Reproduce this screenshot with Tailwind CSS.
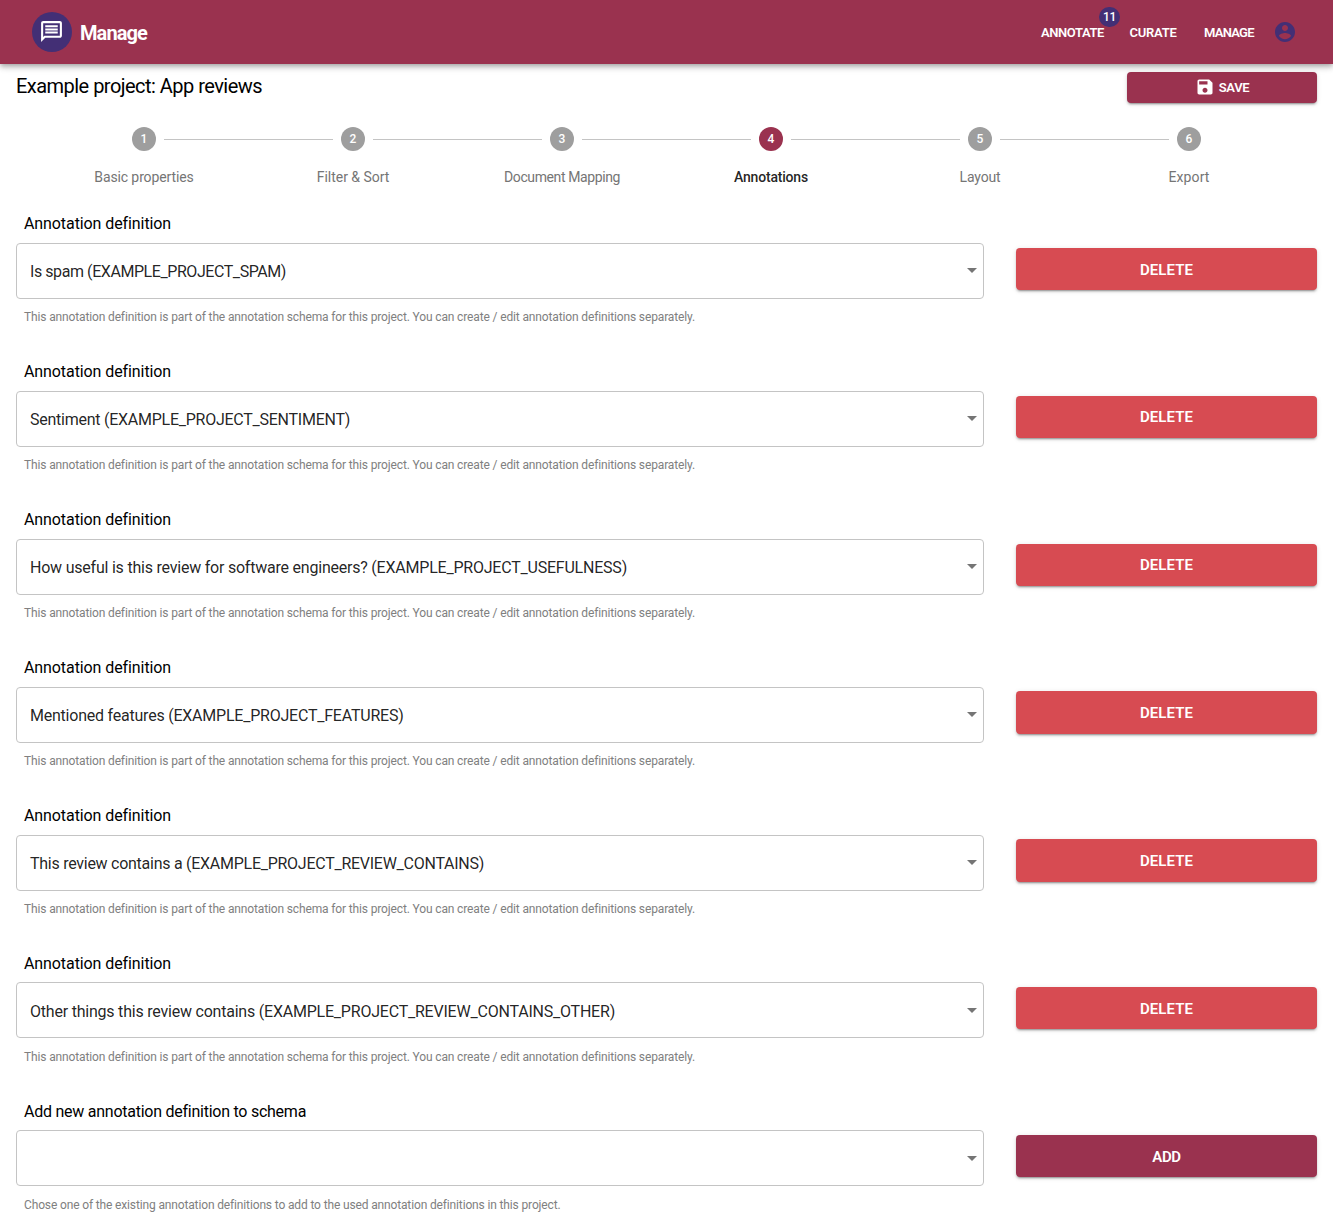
<!DOCTYPE html>
<html lang="en">
<head>
<meta charset="utf-8">
<title>Manage</title>
<script src="https://cdn.jsdelivr.net/npm/@tailwindcss/browser@4"></script>
</head>
<body class="h-[1230px] overflow-hidden bg-white font-['Roboto',sans-serif] text-black">
<header class="relative flex h-16 items-center bg-[#9a324f] pl-8 pr-[36px] text-white shadow-[0_2px_4px_-1px_rgba(0,0,0,0.2),0_4px_5px_0_rgba(0,0,0,0.14),0_1px_10px_0_rgba(0,0,0,0.12)]">
  <div class="flex size-10 items-center justify-center rounded-full bg-[#432f75] pb-px pr-px">
    <svg class="size-[25px]" viewBox="0 0 24 24" fill="currentColor"><path d="M4 4h16v12H5.17L4 17.17V4m0-2c-1.1 0-1.99.9-1.99 2L2 22l4-4h14c1.1 0 2-.9 2-2V4c0-1.1-.9-2-2-2H4zm2 10h12v2H6v-2zm0-3h12v2H6V9zm0-3h12v2H6V6z"/></svg>
  </div>
  <h1 class="ml-2 pt-0.5 text-[20px] font-bold leading-8 tracking-[-0.9px]">Manage</h1>
  <nav class="ml-auto flex items-center text-[13px] font-semibold leading-6">
    <span class="relative w-[88.5px] pt-px tracking-[-0.4px]">ANNOTATE
      <span class="absolute left-[58px] top-[-12.5px] flex h-5 w-[21px] items-center justify-center rounded-full bg-[#432f75] text-[12px] font-medium tracking-[-0.4px]">11</span>
    </span>
    <span class="w-[74.5px] pt-px tracking-[-0.25px]">CURATE</span>
    <span class="w-[69px] pt-px tracking-[-0.75px]">MANAGE</span>
    <svg class="size-6 text-[#432f75]" viewBox="0 0 24 24" fill="currentColor"><path d="M12 2C6.48 2 2 6.48 2 12s4.48 10 10 10 10-4.48 10-10S17.52 2 12 2zm0 3c1.66 0 3 1.34 3 3s-1.34 3-3 3-3-1.34-3-3 1.34-3 3-3zm0 14.2c-2.5 0-4.71-1.28-6-3.22.03-1.99 4-3.08 6-3.08 1.99 0 5.97 1.09 6 3.08-1.29 1.94-3.5 3.22-6 3.22z"/></svg>
  </nav>
</header>
<main class="px-4">
  <div class="flex h-[55px] justify-between pt-2">
    <h2 class="text-[20px] leading-[29px] tracking-[-0.53px]">Example project: App reviews</h2>
    <button class="flex h-[31px] w-[190px] items-center justify-center gap-[4px] rounded bg-[#9a324f] pb-px text-[13px] font-semibold tracking-[-0.3px] text-white shadow-[0_3px_1px_-2px_rgba(0,0,0,0.2),0_2px_2px_0_rgba(0,0,0,0.14),0_1px_5px_0_rgba(0,0,0,0.12)]">
      <svg class="size-5" viewBox="0 0 24 24" fill="currentColor"><path d="M17 3H5c-1.11 0-2 .9-2 2v14c0 1.1.89 2 2 2h14c1.1 0 2-.9 2-2V7l-4-4zm-5 16c-1.66 0-3-1.34-3-3s1.34-3 3-3 3 1.34 3 3-1.34 3-3 3zm3-10H5V5h10v4z"/></svg>
      <span class="pt-px">SAVE</span>
    </button>
  </div>
  <ol class="mx-[23.5px] flex h-[88.9px] pt-[7.5px] text-center text-[14px] leading-5 text-[#757575]">
    <li class="w-[209px]">
      <div class="flex h-6 items-center"><i class="flex-1"></i><b class="mx-2 flex size-6 items-center justify-center rounded-full bg-[#9e9e9e] text-[12px] font-medium text-white">1</b><i class="mt-px h-px flex-1 bg-[#c4c4c4]"></i></div>
      <p class="mt-[16px] tracking-[-0.11px]">Basic properties</p>
    </li>
    <li class="w-[209px]">
      <div class="flex h-6 items-center"><i class="mt-px h-px flex-1 bg-[#c4c4c4]"></i><b class="mx-2 flex size-6 items-center justify-center rounded-full bg-[#9e9e9e] text-[12px] font-medium text-white">2</b><i class="mt-px h-px flex-1 bg-[#c4c4c4]"></i></div>
      <p class="mt-[16px] tracking-[-0.03px]">Filter &amp; Sort</p>
    </li>
    <li class="w-[209px]">
      <div class="flex h-6 items-center"><i class="mt-px h-px flex-1 bg-[#c4c4c4]"></i><b class="mx-2 flex size-6 items-center justify-center rounded-full bg-[#9e9e9e] text-[12px] font-medium text-white">3</b><i class="mt-px h-px flex-1 bg-[#c4c4c4]"></i></div>
      <p class="mt-[16px] tracking-[-0.39px]">Document Mapping</p>
    </li>
    <li class="w-[209px]">
      <div class="flex h-6 items-center"><i class="mt-px h-px flex-1 bg-[#c4c4c4]"></i><b class="mx-2 flex size-6 items-center justify-center rounded-full bg-[#9a324f] text-[12px] font-medium text-white">4</b><i class="mt-px h-px flex-1 bg-[#c4c4c4]"></i></div>
      <p class="mt-[16px] font-medium tracking-[-0.19px] text-black/87">Annotations</p>
    </li>
    <li class="w-[209px]">
      <div class="flex h-6 items-center"><i class="mt-px h-px flex-1 bg-[#c4c4c4]"></i><b class="mx-2 flex size-6 items-center justify-center rounded-full bg-[#9e9e9e] text-[12px] font-medium text-white">5</b><i class="mt-px h-px flex-1 bg-[#c4c4c4]"></i></div>
      <p class="mt-[16px] tracking-[-0.14px]">Layout</p>
    </li>
    <li class="w-[209px]">
      <div class="flex h-6 items-center"><i class="mt-px h-px flex-1 bg-[#c4c4c4]"></i><b class="mx-2 flex size-6 items-center justify-center rounded-full bg-[#9e9e9e] text-[12px] font-medium text-white">6</b><i class="flex-1"></i></div>
      <p class="mt-[16px] tracking-[0.1px]">Export</p>
    </li>
  </ol>
  <div id="rows"></div>
</main>
<script>
const partOf = 'This annotation definition is part of the annotation schema for this project. You can create / edit annotation definitions separately.';
const rows = [
  ['Is spam (EXAMPLE_PROJECT_SPAM)', -0.43],
  ['Sentiment (EXAMPLE_PROJECT_SENTIMENT)', -0.254],
  ['How useful is this review for software engineers? (EXAMPLE_PROJECT_USEFULNESS)', -0.219],
  ['Mentioned features (EXAMPLE_PROJECT_FEATURES)', -0.225],
  ['This review contains a (EXAMPLE_PROJECT_REVIEW_CONTAINS)', -0.265],
  ['Other things this review contains (EXAMPLE_PROJECT_REVIEW_CONTAINS_OTHER)', -0.215],
  null,
];
document.getElementById('rows').innerHTML = rows.map(r => `
  <section class="flex h-[147.92px] gap-8">
    <div class="w-[968px]">
      <p class="h-[35px] pl-2 pt-[4.6px] text-[16px] leading-6 ${r ? 'tracking-[-0.09px]' : 'tracking-[-0.25px]'}">${r ? 'Annotation definition' : 'Add new annotation definition to schema'}</p>
      <div class="flex h-14 items-center justify-between rounded border border-[#c4c4c4] pl-[13px] pr-[6px]">
        <span class="pt-[2.6px] text-[16px] text-black/87" style="letter-spacing:${r ? r[1] : 0}px">${r ? r[0] : ''}</span>
        <svg class="h-[5px] w-[10px] text-[#757575]" viewBox="0 0 10 5" fill="currentColor"><path d="M0 0l5 5 5-5z"/></svg>
      </div>
      <p class="pl-2 pt-[9.5px] text-[12px] leading-[18px] text-[#808080] ${r ? 'tracking-[-0.139px]' : 'tracking-[-0.142px]'}">${r ? partOf : 'Chose one of the existing annotation definitions to add to the used annotation definitions in this project.'}</p>
    </div>
    <button class="mt-[39.8px] h-[42.25px] w-[301px] rounded pt-[2px] text-[15px] font-semibold text-white shadow-[0_3px_1px_-2px_rgba(0,0,0,0.2),0_2px_2px_0_rgba(0,0,0,0.14),0_1px_5px_0_rgba(0,0,0,0.12)] ${r ? 'bg-[#d74b52] tracking-[0.06px]' : 'bg-[#9a324f] tracking-[-0.35px]'}">${r ? 'DELETE' : 'ADD'}</button>
  </section>`).join('');
</script>
</body>
</html>
